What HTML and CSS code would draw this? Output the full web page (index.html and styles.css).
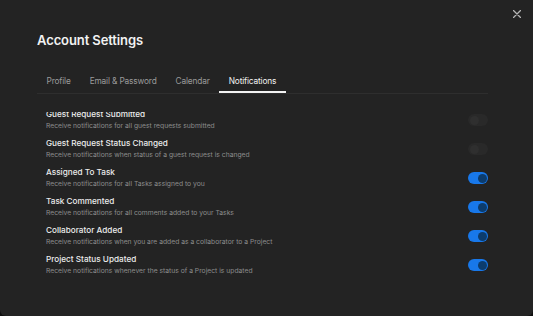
FILE: index.html
```html
<!DOCTYPE html>
<html lang="en">
<head>
<meta charset="utf-8">
<title>Account Settings</title>
<link rel="stylesheet" href="styles.css">
</head>
<body>
<div class="modal">
  <button class="close" aria-label="Close">
    <svg width="8" height="8" viewBox="0 0 8 8"><path d="M0.5 0.5 L7.5 7.5 M7.5 0.5 L0.5 7.5" stroke="#b5b5b5" stroke-width="1.3" stroke-linecap="round"/></svg>
  </button>
  <h1 class="title">Account Settings</h1>
  <nav class="tabs">
    <span class="tab">Profile</span>
    <span class="tab">Email &amp; Password</span>
    <span class="tab">Calendar</span>
    <span class="tab active">Notifications</span>
  </nav>
  <div class="list">
    <div class="row first">
      <div class="text"><div class="name">Guest Request Submitted</div><div class="desc">Receive notifications for all guest requests submitted</div></div>
      <span class="toggle off"><span class="knob"></span></span>
    </div>
    <div class="row">
      <div class="text"><div class="name">Guest Request Status Changed</div><div class="desc">Receive notifications when status of a guest request is changed</div></div>
      <span class="toggle off"><span class="knob"></span></span>
    </div>
    <div class="row">
      <div class="text"><div class="name">Assigned To Task</div><div class="desc">Receive notifications for all Tasks assigned to you</div></div>
      <span class="toggle on"><span class="knob"></span></span>
    </div>
    <div class="row">
      <div class="text"><div class="name">Task Commented</div><div class="desc">Receive notifications for all comments added to your Tasks</div></div>
      <span class="toggle on"><span class="knob"></span></span>
    </div>
    <div class="row">
      <div class="text"><div class="name">Collaborator Added</div><div class="desc">Receive notifications when you are added as a collaborator to a Project</div></div>
      <span class="toggle on"><span class="knob"></span></span>
    </div>
    <div class="row">
      <div class="text"><div class="name">Project Status Updated</div><div class="desc">Receive notifications whenever the status of a Project is updated</div></div>
      <span class="toggle on"><span class="knob"></span></span>
    </div>
  </div>
</div>
</body>
</html>
```
FILE: styles.css
```css
* { box-sizing: border-box; }
html, body { margin: 0; padding: 0; background: #0e0e0e; }
body { font-family: Inter, "Noto Sans", sans-serif; -webkit-font-smoothing: antialiased; }
.modal {
  position: relative;
  width: 533px;
  height: 316px;
  background: #232323;
  border-radius: 0 0 6px 6px;
  padding: 30px 45px 0 37px;
  overflow: hidden;
}
.close {
  position: absolute;
  top: 10px;
  right: 12px;
  width: 8px;
  height: 8px;
  padding: 0;
  border: 0;
  background: none;
  display: flex;
}
.title {
  margin: 0;
  font-size: 13px;
  line-height: 20px;
  font-weight: 600;
  color: #f2f2f2;
  letter-spacing: -0.1px;
}
.tabs {
  margin-top: 25px;
  display: flex;
  border-bottom: 1px solid #2e2e2e;
}
.tab {
  padding: 0 9.5px 4px;
  font-size: 8.3px;
  line-height: 12px;
  letter-spacing: -0.15px;
  color: #9b9b9b;
  border-bottom: 2px solid transparent;
}
.tab.active {
  color: #f2f2f2;
  border-bottom-color: #f2f2f2;
}
.list {
  margin-top: 18px;
  height: 200px;
  overflow: hidden;
  padding-left: 9px;
}
.row {
  display: flex;
  align-items: center;
  justify-content: space-between;
  margin-bottom: 7px;
}
.row.first { margin-top: -3px; }
.name {
  font-size: 8.2px;
  line-height: 11px;
  font-weight: 500;
  color: #ececec;
}
.desc {
  font-size: 6.75px;
  line-height: 11px;
  color: #8c8c8c;
}
.toggle {
  position: relative;
  width: 20px;
  height: 12px;
  border-radius: 6px;
  display: flex;
  align-items: center;
  padding: 0 1.5px;
}
.toggle .knob {
  width: 9px;
  height: 9px;
  border-radius: 50%;
}
.toggle.on { background: #1878ea; justify-content: flex-end; }
.toggle.on .knob { background: #0c3c6d; }
.toggle.off { background: #292929; justify-content: flex-start; }
.toggle.off .knob { background: #2f2f2f; }
```
